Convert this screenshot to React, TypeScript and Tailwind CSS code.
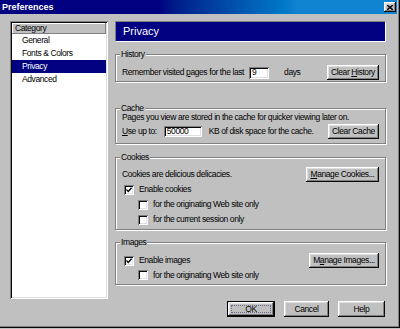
import React from 'react';

const raised =
  'shadow-[inset_-1px_-1px_0_#0a0a0a,inset_1px_1px_0_#ffffff,inset_-2px_-2px_0_#808080,inset_2px_2px_0_#dfdfdf]';
const sunken =
  'shadow-[inset_1px_1px_0_#808080,inset_-1px_-1px_0_#ffffff,inset_2px_2px_0_#0a0a0a,inset_-2px_-2px_0_#dfdfdf]';

function Button({ children, className = '' }: { children: React.ReactNode; className?: string }) {
  return (
    <button type="button" className={`flex h-[15px] shrink-0 items-center justify-center bg-[#c0c0c0] text-black ${raised} ${className}`}>
      {children}
    </button>
  );
}

function Check({ checked = false }: { checked?: boolean }) {
  return (
    <span className={`flex h-[10px] w-[10px] shrink-0 items-center justify-center bg-white ${sunken}`}>
      {checked && (
        <svg width="6" height="6" viewBox="0 0 7 7">
          <path d="M0.5 3 L2.6 5.2 L6.5 0.8" stroke="#000" strokeWidth="1.6" fill="none" />
        </svg>
      )}
    </span>
  );
}

function Group({ label, className = '', children }: { label: string; className?: string; children: React.ReactNode }) {
  return (
    <div className={`relative border border-[#808080] shadow-[inset_1px_1px_0_#ffffff,1px_1px_0_#ffffff] ${className}`}>
      <span className="absolute -top-[5px] left-[4px] bg-[#c0c0c0] px-[1px] leading-[9px]">{label}</span>
      {children}
    </div>
  );
}

export default function App() {
  return (
    <div className="flex h-[329px] w-[400px] flex-col bg-[#c0c0c0] font-['Liberation_Sans',Arial,sans-serif] text-[8.5px] leading-none tracking-[-0.4px] text-black">
      <div className="flex h-[328px] flex-col shadow-[inset_-1px_-1px_0_#0a0a0a,inset_-2px_-2px_0_#808080]">
        {/* Title bar */}
        <div className="mr-[3px] flex h-[14px] shrink-0 items-center justify-between bg-linear-to-r from-[#000080] from-40% to-[#1084d0] to-75% pl-[2px] pr-[1px]">
          <span className="text-[9px] font-bold tracking-[0px] text-white">Preferences</span>
          <span className={`flex h-[10px] w-[12px] items-center justify-center bg-[#c0c0c0] ${raised}`}>
            <svg width="6" height="5" viewBox="0 0 6 5">
              <path d="M0 0 L6 5 M6 0 L0 5" stroke="#000" strokeWidth="1.4" />
            </svg>
          </span>
        </div>

        <div className="flex gap-[7px] pl-[10px] pt-[7px]">
          {/* Category list */}
          <div className={`flex h-[278px] w-[98px] shrink-0 flex-col bg-white p-[2px] ${sunken}`}>
            <div className="flex h-[11px] items-center bg-[#c0c0c0] pl-[3px] shadow-[inset_-1px_-1px_0_#808080,inset_1px_1px_0_#ffffff]">
              Category
            </div>
            {['General', 'Fonts & Colors', 'Privacy', 'Advanced'].map((item) => (
              <div
                key={item}
                className={`flex h-[13px] items-center pl-[10px] ${item === 'Privacy' ? 'bg-[#000080] text-white' : ''}`}
              >
                {item}
              </div>
            ))}
          </div>

          {/* Right panel */}
          <div className="flex w-[271px] flex-col">
            <div className="flex h-[21px] items-center border border-b-white border-l-[#808080] border-r-white border-t-[#808080] bg-[#000080] pl-[7px] text-[11px] tracking-[0px] text-white">
              Privacy
            </div>

            <Group label="History" className="mt-[12px] h-[28px]">
              <div className="flex items-center pl-[6px] pr-[6px] pt-[10px]">
                <span>
                  Remember visited <span className="underline">p</span>ages for the last
                </span>
                <span className={`ml-[5px] flex h-[12px] w-[20px] items-center bg-white pl-[3px] ${sunken}`}>9</span>
                <span className="ml-[15px]">days</span>
                <Button className="ml-auto w-[52px]">
                  <span>
                    Clear <span className="underline">H</span>istory
                  </span>
                </Button>
              </div>
            </Group>

            <Group label="Cache" className="mt-[26px] h-[36px]">
              <div className="flex flex-col pl-[6px] pr-[6px] pt-[3px]">
                <div className="flex h-[10px] items-center">
                  Pages you view are stored in the cache for quicker viewing later on.
                </div>
                <div className="mt-[2px] flex h-[15px] items-center">
                  <span>
                    <span className="underline">U</span>se up to:
                  </span>
                  <span className={`ml-[7px] flex h-[11px] w-[38px] items-center bg-white pl-[3px] ${sunken}`}>50000</span>
                  <span className="ml-[7px]">KB of disk space for the cache.</span>
                  <Button className="ml-auto w-[51px]">Clear Cache</Button>
                </div>
              </div>
            </Group>

            <Group label="Cookies" className="mt-[13px] h-[73px]">
              <div className="flex flex-col pl-[6px] pr-[6px] pt-[9px]">
                <div className="flex h-[15px] items-center justify-between">
                  <span>Cookies are delicious delicacies.</span>
                  <Button className="w-[73px]">
                    <span>
                      <span className="underline">M</span>anage Cookies...
                    </span>
                  </Button>
                </div>
                <div className="flex h-[15px] items-center gap-[5px] pl-[2px]">
                  <Check checked />
                  <span>Enable cookies</span>
                </div>
                <div className="flex h-[15px] items-center gap-[5px] pl-[16px]">
                  <Check />
                  <span>for the originating Web site only</span>
                </div>
                <div className="flex h-[15px] items-center gap-[5px] pl-[16px]">
                  <Check />
                  <span>for the current session only</span>
                </div>
              </div>
            </Group>

            <Group label="Images" className="mt-[12px] h-[43px]">
              <div className="flex flex-col pl-[6px] pr-[6px] pt-[10px]">
                <div className="flex h-[15px] items-center justify-between">
                  <div className="flex items-center gap-[5px] pl-[2px]">
                    <Check checked />
                    <span>Enable images</span>
                  </div>
                  <Button className="w-[70px]">
                    <span>
                      M<span className="underline">a</span>nage Images...
                    </span>
                  </Button>
                </div>
                <div className="flex h-[14px] items-center gap-[5px] pl-[16px]">
                  <Check />
                  <span>for the originating Web site only</span>
                </div>
              </div>
            </Group>

            <div className="mt-[16px] flex justify-end gap-[9px] pr-[1px]">
              <button
                type="button"
                className={`relative flex h-[16px] w-[48px] items-center justify-center border border-black bg-[#c0c0c0] ${raised}`}
              >
                <span className="absolute inset-[3px] border border-dotted border-[#6a6a8a]" />
                OK
              </button>
              <Button className="h-[16px] w-[45px]">Cancel</Button>
              <Button className="h-[16px] w-[47px]">Help</Button>
            </div>
          </div>
        </div>
      </div>
    </div>
  );
}
